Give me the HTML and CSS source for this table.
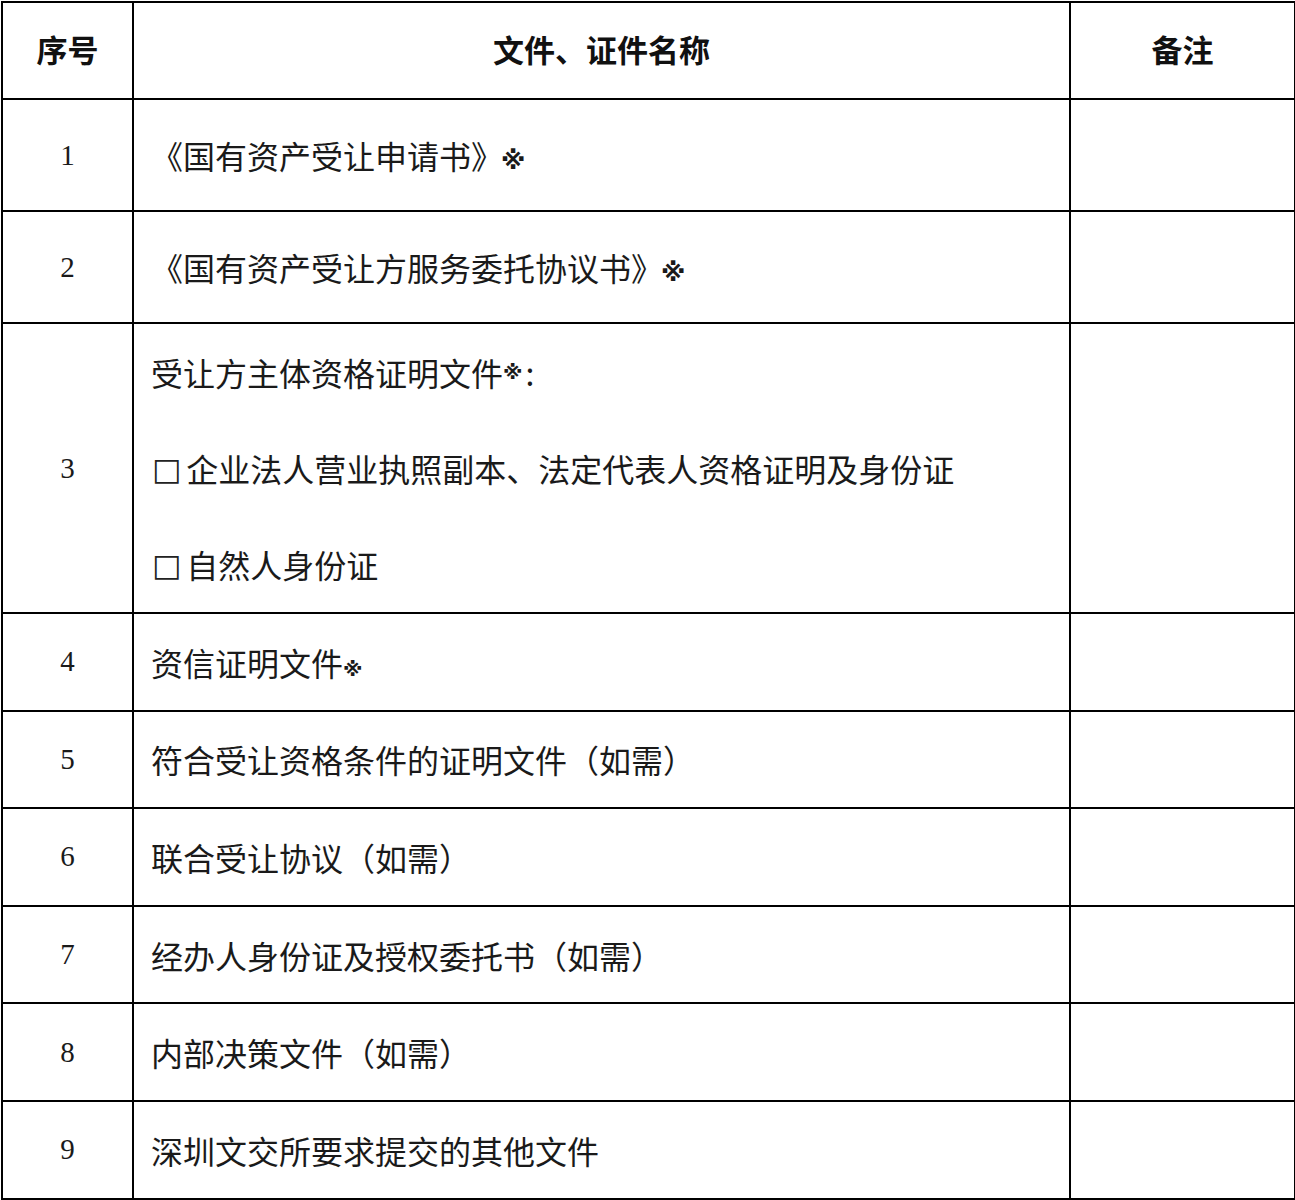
FILE: index.html
```html
<!DOCTYPE html>
<html lang="zh-CN">
<head>
<meta charset="utf-8">
<link rel="stylesheet" href="styles.css">
</head>
<body>
<table class="doc-table">
  <colgroup>
    <col class="c-no">
    <col class="c-name">
    <col class="c-note">
  </colgroup>
  <thead>
    <tr class="r-head">
      <th>序号</th>
      <th>文件、证件名称</th>
      <th>备注</th>
    </tr>
  </thead>
  <tbody>
    <tr class="r-tall">
      <td class="num">1</td>
      <td class="name">《国有资产受让申请书》<span class="mark">※</span></td>
      <td></td>
    </tr>
    <tr class="r-tall">
      <td class="num">2</td>
      <td class="name">《国有资产受让方服务委托协议书》<span class="mark">※</span></td>
      <td></td>
    </tr>
    <tr class="r-multi">
      <td class="num">3</td>
      <td class="name">
        <div class="line">受让方主体资格证明文件<span class="mark-s">※</span><span class="colon">:</span></div>
        <div class="line"><span class="box">□</span>企业法人营业执照副本、法定代表人资格证明及身份证</div>
        <div class="line"><span class="box">□</span>自然人身份证</div>
      </td>
      <td></td>
    </tr>
    <tr class="r-std">
      <td class="num">4</td>
      <td class="name">资信证明文件<span class="mark-s">※</span></td>
      <td></td>
    </tr>
    <tr class="r-std">
      <td class="num">5</td>
      <td class="name">符合受让资格条件的证明文件（如需）</td>
      <td></td>
    </tr>
    <tr class="r-std">
      <td class="num">6</td>
      <td class="name">联合受让协议（如需）</td>
      <td></td>
    </tr>
    <tr class="r-std">
      <td class="num">7</td>
      <td class="name">经办人身份证及授权委托书（如需）</td>
      <td></td>
    </tr>
    <tr class="r-std">
      <td class="num">8</td>
      <td class="name">内部决策文件（如需）</td>
      <td></td>
    </tr>
    <tr class="r-std">
      <td class="num">9</td>
      <td class="name">深圳文交所要求提交的其他文件</td>
      <td></td>
    </tr>
  </tbody>
</table>
</body>
</html>
```
FILE: styles.css
```css
html, body {
  margin: 0;
  padding: 0;
  background: #ffffff;
}

body {
  font-family: "Noto Sans CJK SC", "Noto Sans", sans-serif;
  color: #1a1a1a;
}

.doc-table {
  border-collapse: collapse;
  table-layout: fixed;
  width: 1293px;
  margin: 1px 0 0 1px;
}

.c-no { width: 131px; }
.c-name { width: 937px; }
.c-note { width: 225px; }

.doc-table th,
.doc-table td {
  border: 2px solid #000;
  padding: 0;
  vertical-align: middle;
}

.doc-table th {
  font-size: 31px;
  font-weight: 700;
  text-align: center;
  color: #111;
}

.r-head { height: 97px; }
.r-tall { height: 112px; }
.r-multi { height: 290px; }
.r-std { height: 97.6px; }

.r-head th { padding-bottom: 4px; }

.num {
  font-family: "Liberation Serif", "Times New Roman", serif;
  font-size: 29px;
  text-align: center;
}

.doc-table td.name {
  font-size: 32px;
  padding-left: 17px;
  text-align: left;
  white-space: nowrap;
}

.line {
  display: flex;
  align-items: center;
  height: 96px;
  overflow: hidden;
}

.box {
  font-family: "DejaVu Sans", sans-serif;
  font-size: 31px;
  line-height: 1;
  color: #222;
  margin: 3px 5px 0 1px;
}

.mark {
  font-family: "DejaVu Sans", sans-serif;
  font-size: 25px;
  font-weight: 700;
  margin-left: -2px;
}

.mark-s {
  font-family: "DejaVu Sans", sans-serif;
  font-size: 20px;
  font-weight: 700;
}

.colon {
  margin-left: 3px;
}
```
